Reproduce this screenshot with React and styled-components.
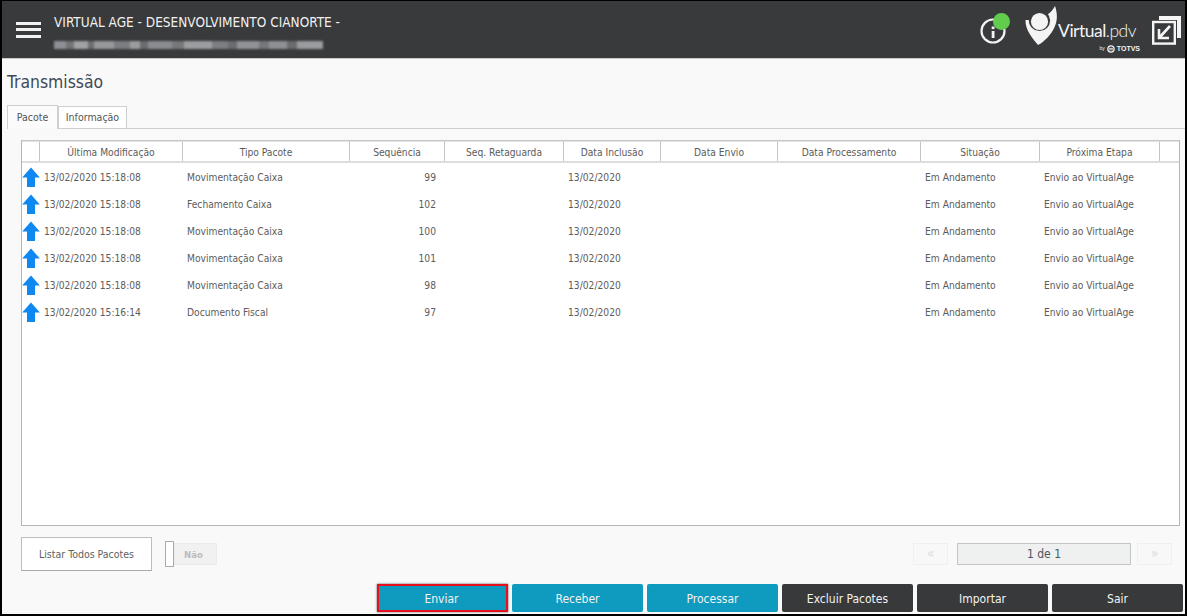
import React from "react";
import styled, { createGlobalStyle } from "styled-components";

const Global = createGlobalStyle`
  html, body { margin: 0; padding: 0; background: #fff; }
  body { font-family: "DejaVu Sans", "Noto Sans", Tahoma, sans-serif; font-stretch: condensed; }
`;

const Frame = styled.div`
  width: 1187px; height: 616px; box-sizing: border-box;
  border: solid #000; border-width: 1px 2px 2px 2px;
  background: #f9f9f9; display: flex; flex-direction: column; overflow: hidden;
`;
const Header = styled.header`
  height: 57px; flex: none; background: #383a3c; display: flex; align-items: center;
  border-bottom: 1px solid #c9c9c9; box-sizing: content-box;
`;
const MenuIcon = styled.div`
  width: 25px; height: 16px; margin-left: 14px; display: flex; flex-direction: column; justify-content: space-between;
  span { display: block; height: 3px; background: #f2f2f2; }
`;
const HeaderText = styled.div`
  margin-left: 13px; flex: 1; display: flex; flex-direction: column; gap: 11px; margin-top: 4px;
`;
const Company = styled.div`
  color: #f1f1f1; font-size: 13.5px; line-height: 16px; white-space: nowrap;
`;
const Blurred = styled.div`
  display: flex; height: 8px; width: 269px; filter: blur(0.8px);
`;
const BlurChunk = styled.span`
  display: block; height: 8px; flex: none;
  width: ${p => p.$w}px; background: ${p => p.$c};
`;
const HeaderRight = styled.div`
  display: flex; align-items: center; margin-right: 3px;
`;
const InfoWrap = styled.div`
  position: relative; width: 30px; height: 30px; margin-right: 15px; margin-top: 1px;
`;
const GreenDot = styled.span`
  position: absolute; left: 13px; top: -2px; width: 17px; height: 17px; border-radius: 50%; background: #62cc4d;
`;
const Brand = styled.div`
  display: flex; align-items: flex-start; height: 40px; margin-right: 16px; margin-top: -7px;
`;
const BrandText = styled.div`
  display: flex; flex-direction: column; align-items: flex-end; margin-left: 3px; margin-top: 15px; width: 74px;
`;
const BrandName = styled.div`
  color: #f4f4f4; font-family: "Lato", sans-serif; font-stretch: normal; font-size: 17.5px; line-height: 20px; white-space: nowrap; letter-spacing: -0.5px;
  b { font-weight: 400; } span { font-weight: 300; }
`;
const BrandBy = styled.div`
  color: #f4f4f4; font-family: "Liberation Sans", sans-serif; font-size: 7px; line-height: 9px; font-weight: 700; display: flex; align-items: center; gap: 2px; margin-top: 3px; margin-right: -4px;
  small { font-size: 5px; font-weight: 400; }
`;
const Main = styled.main`
  flex: 1; min-height: 0; display: flex; flex-direction: column;
`;
const Title = styled.h1`
  margin: 11px 0 0 5px; font-size: 17.4px; line-height: 24px; font-weight: 400; color: #3f4a55;
`;
const Tabs = styled.div`
  display: flex; align-items: flex-end; margin: 11px 0 0 5px; height: 24px;
`;
const Tab = styled.div`
  box-sizing: border-box; font-size: 10.5px; color: #555; background: ${p => p.$active ? "#fbfbfb" : "#fff"};
  border: 1px solid #cfcfcf; ${p => p.$active ? "border-bottom: none;" : ""}
  height: ${p => p.$active ? 24 : 23}px; width: ${p => p.$w}px; display: flex; align-items: center; justify-content: center;
  padding-bottom: 1px;
`;
const TabLine = styled.div`
  flex: 1; border-bottom: 1px solid #cfcfcf; align-self: flex-end;
`;
const Panel = styled.div`
  flex: 1; min-height: 0; padding: 11px 5px 0 19px; display: flex; flex-direction: column;
`;
const Table = styled.div`
  height: 386px; flex: none; box-sizing: border-box; border: 1px solid #b5b5b5; background: #fff; border-top-color: #c8c8c8;
`;
const Row = styled.div`
  display: grid;
  grid-template-columns: 18px 143px 167px 95px 119px 97px 117px 143px 119px 120px 19px;
`;
const HeadRow = styled(Row)`
  height: 20px; border-bottom: 2px solid #dedede; box-sizing: content-box;
`;
const HeadCell = styled.div`
  box-sizing: border-box; border-right: 1px solid #c4c4c4; border-top: 1px solid #e2e2e2; color: #5c5c5c; font-size: 10.2px;
  display: flex; align-items: center; justify-content: center; white-space: nowrap; padding-top: 1px;
  &:last-child { border-right: none; }
`;
const BodyRow = styled(Row)`
  height: 27px; align-items: center;
`;
const Cell = styled.div`
  box-sizing: border-box; color: #5c5c5c; font-size: 10.2px; white-space: nowrap; padding: 2px 4px 0;
  text-align: ${p => p.$right ? "right" : "left"};
  ${p => p.$right ? "padding-right: 9px;" : ""}
`;
const IconCell = styled.div`
  display: flex; align-items: center; justify-content: flex-start; height: 27px;
`;
const Footer = styled.div`
  display: flex; align-items: center; margin-top: 11px; height: 34px;
`;
const ListButton = styled.div`
  box-sizing: border-box; width: 131px; height: 34px; background: #fff; border: 1px solid #bdbdbd; border-bottom-color: #a9a9a9;
  color: #5f5f5f; font-size: 10.5px; display: flex; align-items: center; justify-content: center;
`;
const Toggle = styled.div`
  display: flex; align-items: center; margin-left: 13px;
`;
const Knob = styled.div`
  box-sizing: border-box; width: 9px; height: 26px; background: #fff; border: 1px solid #aaa;
`;
const ToggleLabel = styled.div`
  box-sizing: border-box; width: 43px; height: 22px; background: #f1f1f1; border: 1px solid #ebebeb; color: #bcbcbc; font-size: 9.5px; font-weight: 600;
  display: flex; align-items: center; padding-left: 9px;
`;
const Pager = styled.div`
  margin-left: auto; margin-right: 8px; display: flex; align-items: center;
`;
const PageArrow = styled.div`
  box-sizing: border-box; width: 35px; height: 22px; background: #f8f8f8; border: 1px solid #f0f0f0; color: #dcdcdc; font-size: 14px;
  display: flex; align-items: center; justify-content: center; padding-bottom: 3px;
`;
const PageLabel = styled.div`
  box-sizing: border-box; width: 174px; height: 22px; margin: 0 6px 0 9px; background: #eff0f0; border: 1px solid #c6c6c6; color: #4b5560; font-size: 12px;
  display: flex; align-items: center; justify-content: center;
`;
const Actions = styled.div`
  display: flex; justify-content: flex-end; gap: 4px; margin-top: 13px; margin-right: -3px;
`;
const ActionButton = styled.div`
  box-sizing: border-box; width: 131px; height: 28px; border-radius: 2px; color: #f3f3f3; font-size: 12px;
  background: ${p => p.$tone === "dark" ? "#37393b" : "#0f9abf"};
  display: flex; align-items: center; justify-content: center; padding-top: 2px;
  ${p => p.$focus ? "border: 2px solid #e8101c; border-radius: 0; box-shadow: 0 0 2px #555; padding-top: 2px; padding-right: 2px;" : ""}
`;

const ArrowUp = () => (
  <svg width="18" height="20" viewBox="0 0 18 20">
    <path d="M9 0.5 L17.8 10.5 H13 V20 H5 V10.5 H0.2 Z" fill="#0f88f2" />
  </svg>
);

const InfoIcon = () => (
  <svg width="30" height="30" viewBox="0 0 30 30">
    <circle cx="13" cy="16" r="11.5" fill="none" stroke="#f4f4f4" strokeWidth="2.2" />
    <rect x="11.7" y="16" width="2.8" height="7" fill="#f4f4f4" />
    <rect x="11.7" y="11.5" width="2.8" height="2.6" fill="#f4f4f4" />
  </svg>
);

const Logo = () => (
  <svg width="34" height="40" viewBox="0 0 34 40">
    <path d="M0.5 14 C0 24 8 33 13 39 C19 36 27 28 30 20 C33 13 32 6 30 0 C28 4 25 7 22 9 L14 14 Z" fill="#f4f4f4" />
    <circle cx="14.5" cy="14.5" r="10.6" fill="#383a3c" />
    <circle cx="14.5" cy="15.5" r="8.6" fill="#f4f4f4" />
  </svg>
);

const ExpandIcon = () => (
  <svg width="30" height="30" viewBox="0 0 30 30">
    <path d="M7 1 H29 V23 H25 V5 H7 Z" fill="#f5f5f5" />
    <rect x="1.2" y="7" width="21.6" height="21.6" fill="none" stroke="#f5f5f5" strokeWidth="2.4" />
    <path d="M18 11 L7 23 M7 14 V23 H17" fill="none" stroke="#f5f5f5" strokeWidth="2.6" />
  </svg>
);

const TotvsMark = () => (
  <svg width="8" height="8" viewBox="0 0 8 8">
    <circle cx="4" cy="4" r="3.2" fill="none" stroke="#f4f4f4" strokeWidth="1.2" />
    <path d="M1.8 3.4 H6.2 M1.8 4.8 H6.2" stroke="#f4f4f4" strokeWidth="0.8" />
  </svg>
);

const columns = ["", "Última Modificação", "Tipo Pacote", "Sequência", "Seq. Retaguarda", "Data Inclusão", "Data Envio", "Data Processamento", "Situação", "Próxima Etapa", ""];

const rows = [
  ["13/02/2020 15:18:08", "Movimentação Caixa", "99"],
  ["13/02/2020 15:18:08", "Fechamento Caixa", "102"],
  ["13/02/2020 15:18:08", "Movimentação Caixa", "100"],
  ["13/02/2020 15:18:08", "Movimentação Caixa", "101"],
  ["13/02/2020 15:18:08", "Movimentação Caixa", "98"],
  ["13/02/2020 15:16:14", "Documento Fiscal", "97"],
];

const chunks = [[12,"#8d9094"],[8,"#727476"],[14,"#a0a2a4"],[6,"#6c6e70"],[20,"#96989a"],[16,"#7b7d80"],[10,"#9a9c9e"],[8,"#6a6c6e"],[24,"#8a8c90"],[12,"#767879"],[28,"#9b9da0"],[16,"#7c7e82"],[9,"#6a6c6e"],[22,"#909295"],[10,"#75777a"],[18,"#8e9093"],[10,"#6a6c6e"],[26,"#999b9e"]];

const actions = [
  ["Enviar", "blue", true],
  ["Receber", "blue"],
  ["Processar", "blue"],
  ["Excluir Pacotes", "dark"],
  ["Importar", "dark"],
  ["Sair", "dark"],
];

export default function App() {
  return (
    <Frame>
      <Global />
      <Header>
        <MenuIcon><span /><span /><span /></MenuIcon>
        <HeaderText>
          <Company>VIRTUAL AGE - DESENVOLVIMENTO CIANORTE -</Company>
          <Blurred>
            {chunks.map((c, i) => <BlurChunk key={i} $w={c[0]} $c={c[1]} />)}
          </Blurred>
        </HeaderText>
        <HeaderRight>
          <InfoWrap><InfoIcon /><GreenDot /></InfoWrap>
          <Brand>
            <Logo />
            <BrandText>
              <BrandName><b>Virtual</b><span>.pdv</span></BrandName>
              <BrandBy><small>by</small><TotvsMark />TOTVS</BrandBy>
            </BrandText>
          </Brand>
          <ExpandIcon />
        </HeaderRight>
      </Header>
      <Main>
        <Title>Transmissão</Title>
        <Tabs>
          <Tab $active $w={51}>Pacote</Tab>
          <Tab $w={69}>Informação</Tab>
          <TabLine />
        </Tabs>
        <Panel>
          <Table>
            <HeadRow>
              {columns.map((c, i) => <HeadCell key={i}>{c}</HeadCell>)}
            </HeadRow>
            {rows.map((r, i) => (
              <BodyRow key={i}>
                <IconCell><ArrowUp /></IconCell>
                <Cell>{r[0]}</Cell>
                <Cell>{r[1]}</Cell>
                <Cell $right>{r[2]}</Cell>
                <Cell />
                <Cell>13/02/2020</Cell>
                <Cell />
                <Cell />
                <Cell>Em Andamento</Cell>
                <Cell>Envio ao VirtualAge</Cell>
                <Cell />
              </BodyRow>
            ))}
          </Table>
          <Footer>
            <ListButton>Listar Todos Pacotes</ListButton>
            <Toggle><Knob /><ToggleLabel>Não</ToggleLabel></Toggle>
            <Pager>
              <PageArrow>«</PageArrow>
              <PageLabel>1 de 1</PageLabel>
              <PageArrow>»</PageArrow>
            </Pager>
          </Footer>
          <Actions>
            {actions.map(([label, tone, focus]) => (
              <ActionButton key={label} $tone={tone} $focus={focus}>{label}</ActionButton>
            ))}
          </Actions>
        </Panel>
      </Main>
    </Frame>
  );
}
